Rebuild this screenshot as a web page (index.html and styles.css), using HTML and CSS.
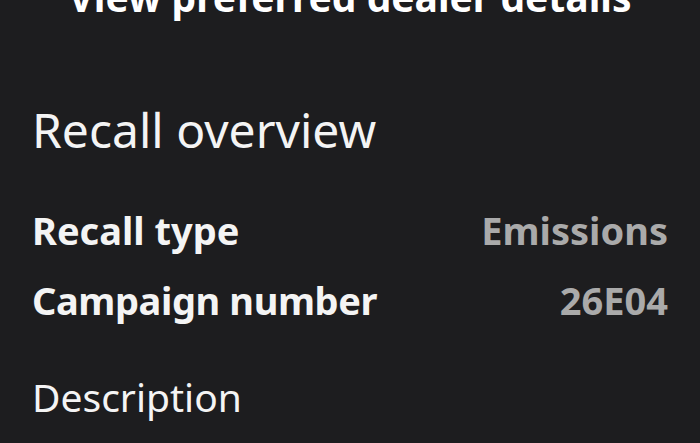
FILE: index.html
```html
<!DOCTYPE html>
<html lang="en">
<head>
    <meta charset="UTF-8">
    <meta name="viewport" content="width=device-width, initial-scale=1.0">
    <title>Recall</title>
    <link rel="stylesheet" href="styles.css">
</head>
<body>
    <div class="screen">
        <!-- Dealer link, scrolled partly off the top -->
        <div class="dealer-link">View preferred dealer details</div>

        <!-- Recall overview -->
        <section class="overview">
            <h2>Recall overview</h2>
            <div class="row">
                <span class="label">Recall type</span>
                <span class="value">Emissions</span>
            </div>
            <div class="row">
                <span class="label">Campaign number</span>
                <span class="value">26E04</span>
            </div>
            <h3>Description</h3>
        </section>
    </div>
</body>
</html>
```

FILE: styles.css
```css
body {
    margin: 0;
    padding: 0;
    background: #1d1d1f;
    color: #f4f4f4;
    font-family: "Noto Sans", "Open Sans", sans-serif;
    height: 100vh;
    overflow: hidden;
}

.screen {
    padding: 0 32px;
}

.dealer-link {
    margin-top: -25px;
    text-align: center;
    font-size: 39px;
    font-weight: bold;
    line-height: 44px;
    color: #ffffff;
}

.overview h2 {
    margin: 81px 0 0;
    font-size: 48px;
    font-weight: normal;
    line-height: 60px;
}

.row {
    display: flex;
    justify-content: space-between;
    font-size: 38px;
    font-weight: bold;
    line-height: 50px;
}

.row:first-of-type {
    margin-top: 45px;
}

.row + .row {
    margin-top: 20px;
}

.row + .row .label {
    letter-spacing: -0.4px;
}

.value {
    color: #aaaaaa;
}

.overview h3 {
    margin: 46px 0 0;
    font-size: 39px;
    font-weight: normal;
    line-height: 52px;
}
```
